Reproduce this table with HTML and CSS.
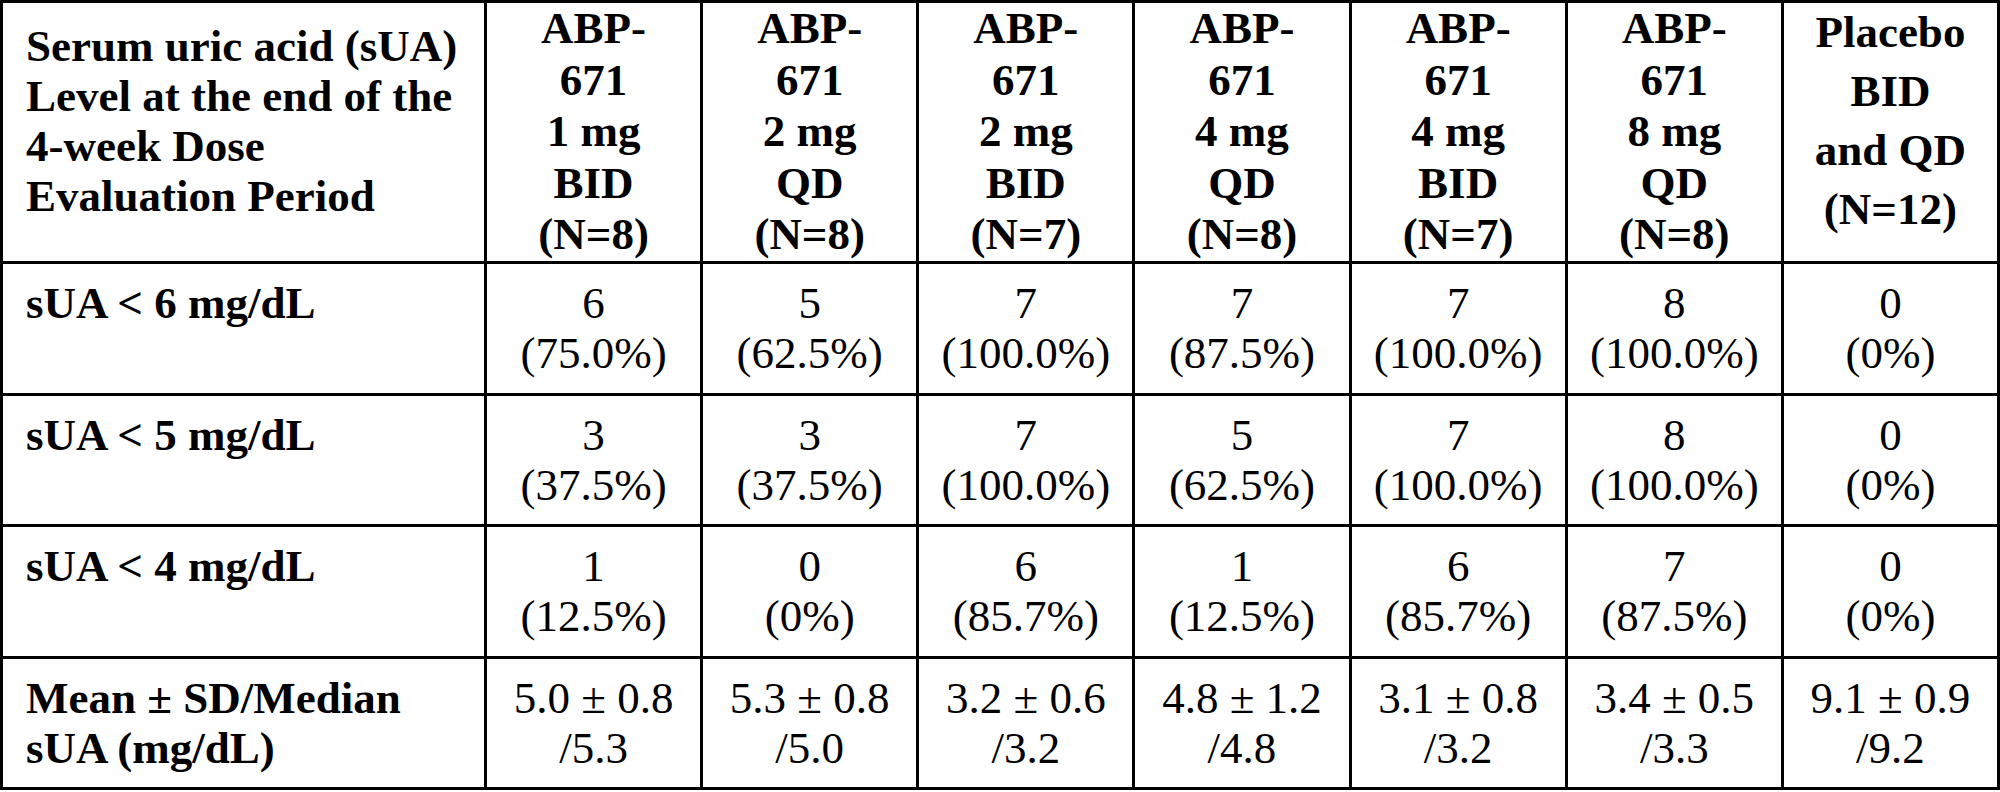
FILE: index.html
```html
<!DOCTYPE html>
<html lang="en">
<head>
<meta charset="utf-8">
<title>Serum uric acid levels</title>
<link rel="stylesheet" href="styles.css">
</head>
<body>
<table class="sua-table">
  <colgroup>
    <col class="col-label">
    <col><col><col><col><col><col><col>
  </colgroup>
  <thead>
    <tr class="row-head">
      <th class="label head-label">Serum uric acid (sUA)<br>Level at the end of the<br>4-week Dose<br>Evaluation Period</th>
      <th class="dose">ABP-<br>671<br>1 mg<br>BID<br>(N=8)</th>
      <th class="dose">ABP-<br>671<br>2 mg<br>QD<br>(N=8)</th>
      <th class="dose">ABP-<br>671<br>2 mg<br>BID<br>(N=7)</th>
      <th class="dose">ABP-<br>671<br>4 mg<br>QD<br>(N=8)</th>
      <th class="dose">ABP-<br>671<br>4 mg<br>BID<br>(N=7)</th>
      <th class="dose">ABP-<br>671<br>8 mg<br>QD<br>(N=8)</th>
      <th class="dose placebo">Placebo<br>BID<br>and QD<br>(N=12)</th>
    </tr>
  </thead>
  <tbody>
    <tr class="row-a">
      <th class="label">sUA &lt; 6 mg/dL</th>
      <td>6<br>(75.0%)</td>
      <td>5<br>(62.5%)</td>
      <td>7<br>(100.0%)</td>
      <td>7<br>(87.5%)</td>
      <td>7<br>(100.0%)</td>
      <td>8<br>(100.0%)</td>
      <td>0<br>(0%)</td>
    </tr>
    <tr class="row-b">
      <th class="label">sUA &lt; 5 mg/dL</th>
      <td>3<br>(37.5%)</td>
      <td>3<br>(37.5%)</td>
      <td>7<br>(100.0%)</td>
      <td>5<br>(62.5%)</td>
      <td>7<br>(100.0%)</td>
      <td>8<br>(100.0%)</td>
      <td>0<br>(0%)</td>
    </tr>
    <tr class="row-a">
      <th class="label">sUA &lt; 4 mg/dL</th>
      <td>1<br>(12.5%)</td>
      <td>0<br>(0%)</td>
      <td>6<br>(85.7%)</td>
      <td>1<br>(12.5%)</td>
      <td>6<br>(85.7%)</td>
      <td>7<br>(87.5%)</td>
      <td>0<br>(0%)</td>
    </tr>
    <tr class="row-b">
      <th class="label">Mean ± SD/Median<br>sUA (mg/dL)</th>
      <td>5.0 ± 0.8<br>/5.3</td>
      <td>5.3 ± 0.8<br>/5.0</td>
      <td>3.2 ± 0.6<br>/3.2</td>
      <td>4.8 ± 1.2<br>/4.8</td>
      <td>3.1 ± 0.8<br>/3.2</td>
      <td>3.4 ± 0.5<br>/3.3</td>
      <td>9.1 ± 0.9<br>/9.2</td>
    </tr>
  </tbody>
</table>
</body>
</html>
```

FILE: styles.css
```css
html, body {
  margin: 0;
  padding: 0;
  background: #ffffff;
}

.sua-table {
  width: 2000px;
  table-layout: fixed;
  border-collapse: separate;
  border-spacing: 0;
  border-top: 3px solid #000;
  border-left: 3px solid #000;
  font-family: "Liberation Serif", "Times New Roman", serif;
  font-size: 45px;
  color: #000;
}

.col-label {
  width: 484px;
}

.sua-table th,
.sua-table td {
  border-right: 3px solid #000;
  border-bottom: 3px solid #000;
  padding: 0;
  vertical-align: top;
  white-space: nowrap;
  text-align: center;
}

.sua-table th {
  font-weight: bold;
}

.sua-table td {
  font-weight: normal;
  line-height: 50px;
  padding-top: 14px;
}

.row-head {
  height: 261px;
}

.row-a {
  height: 132px;
}

.row-b {
  height: 131px;
}

.sua-table .label {
  text-align: left;
  padding-left: 23px;
  line-height: 50px;
  padding-top: 14px;
}

.sua-table .head-label {
  line-height: 50px;
  padding-top: 18px;
}

.sua-table .dose {
  line-height: 51.5px;
  padding-top: 0;
}

.sua-table .placebo {
  line-height: 59px;
  padding-top: 0;
}
```
